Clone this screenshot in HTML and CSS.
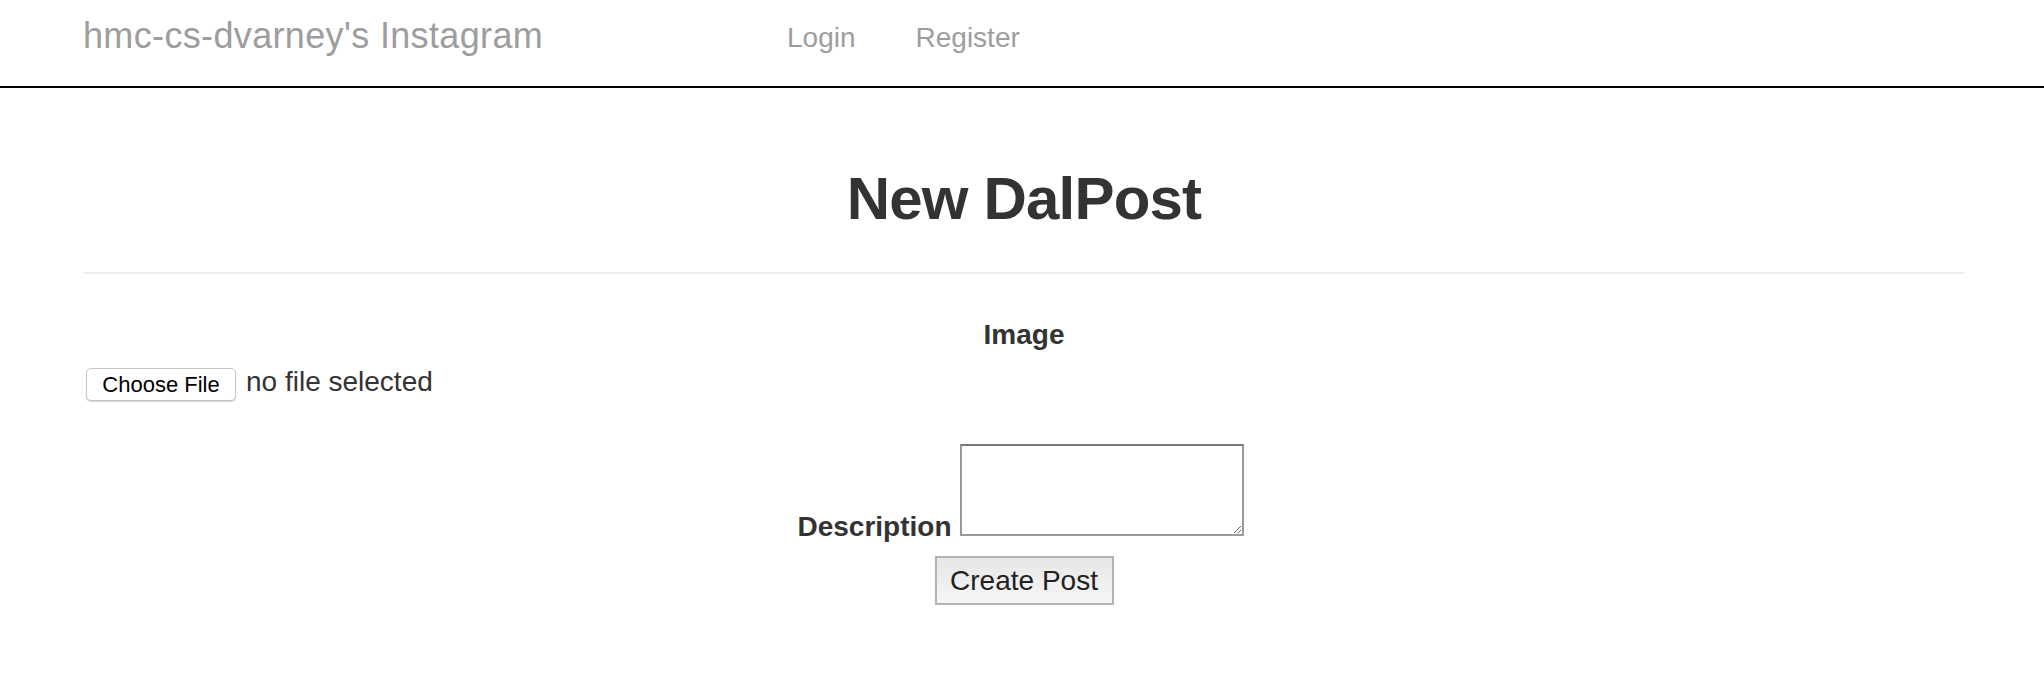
FILE: index.html
```html
<!DOCTYPE html>
<html lang="en">
<head>
<meta charset="utf-8">
<title>New DalPost</title>
<link rel="stylesheet" href="styles.css">
</head>
<body>
<header class="navbar">
  <div class="navbar-inner">
    <a class="brand" href="#">hmc-cs-dvarney's Instagram</a>
    <nav class="nav">
      <a class="nav-link" href="#">Login</a>
      <a class="nav-link" href="#">Register</a>
    </nav>
  </div>
</header>
<main class="container">
  <h1 class="page-title">New DalPost</h1>
  <hr class="divider">
  <form class="post-form">
    <label class="field-label image-label">Image</label>
    <div class="file-row">
      <button type="button" class="file-button">Choose File</button>
      <span class="file-name">no file selected</span>
    </div>
    <div class="desc-row">
      <label class="field-label desc-label" for="desc">Description</label>
      <textarea id="desc" class="desc-input"></textarea>
    </div>
    <div class="submit-row">
      <button type="button" class="submit-button">Create Post</button>
    </div>
  </form>
</main>
</body>
</html>
```

FILE: styles.css
```css
html, body {
  margin: 0;
  padding: 0;
  background: #fff;
}

body {
  font-family: "Liberation Sans", Arial, Helvetica, sans-serif;
  color: #333;
}

a {
  text-decoration: none;
}

.navbar {
  height: 86px;
  border-bottom: 2px solid #000;
}

.navbar-inner {
  display: flex;
  align-items: flex-start;
  padding-left: 83px;
}

.brand {
  flex: 0 0 674px;
  font-size: 36px;
  line-height: 40px;
  padding-top: 16px;
  letter-spacing: 0.35px;
  color: #9d9d9d;
}

.nav {
  display: flex;
}

.nav-link {
  font-size: 28px;
  line-height: 40px;
  padding: 18px 30px 0;
  color: #9d9d9d;
}

.container {
  width: 1880px;
  padding-left: 84px;
}

.page-title {
  margin: 78px 0 0;
  font-size: 60px;
  line-height: 66px;
  font-weight: 700;
  letter-spacing: -0.8px;
  text-align: center;
  color: #333;
}

.divider {
  margin: 40px 0 0;
  border: 0;
  border-top: 2px solid #eee;
  height: 0;
}

.post-form {
  display: flex;
  flex-direction: column;
}

.field-label {
  font-size: 28px;
  font-weight: 700;
  color: #333;
}

.image-label {
  display: block;
  margin-top: 41px;
  line-height: 40px;
  text-align: center;
}

.file-row {
  display: flex;
  align-items: flex-start;
  margin-top: 13px;
  padding-left: 2px;
}

.file-button {
  display: flex;
  align-items: center;
  justify-content: center;
  box-sizing: border-box;
  width: 150px;
  height: 33px;
  padding: 1px 0 0;
  font-family: "Liberation Sans", Arial, sans-serif;
  font-size: 22px;
  color: #000;
  background: #fff;
  border: 1px solid #c6c6c6;
  border-radius: 5px;
  box-shadow: 0 1px 1px rgba(0, 0, 0, 0.18);
}

.file-name {
  margin-left: 10px;
  margin-top: -2px;
  font-size: 28px;
  line-height: 32px;
  color: #333;
}

.desc-row {
  display: flex;
  justify-content: center;
  align-items: flex-end;
  gap: 8px;
  margin-top: 43px;
  padding-right: 7px;
}

.desc-label {
  line-height: 28px;
  margin-bottom: -5px;
}

.desc-input {
  box-sizing: border-box;
  width: 284px;
  height: 92px;
  margin: 0;
  border: 2px solid #9a9a9a;
  border-top-color: #777;
  background: #fff;
}

.submit-row {
  display: flex;
  justify-content: center;
  margin-top: 20px;
}

.submit-button {
  box-sizing: border-box;
  width: 179px;
  height: 49px;
  padding: 0;
  font-family: "Liberation Sans", Arial, sans-serif;
  font-size: 28px;
  color: #222;
  border: 2px solid #b3b3b3;
  border-radius: 0;
  background: linear-gradient(#e7e7e7, #f6f6f6);
}
```
